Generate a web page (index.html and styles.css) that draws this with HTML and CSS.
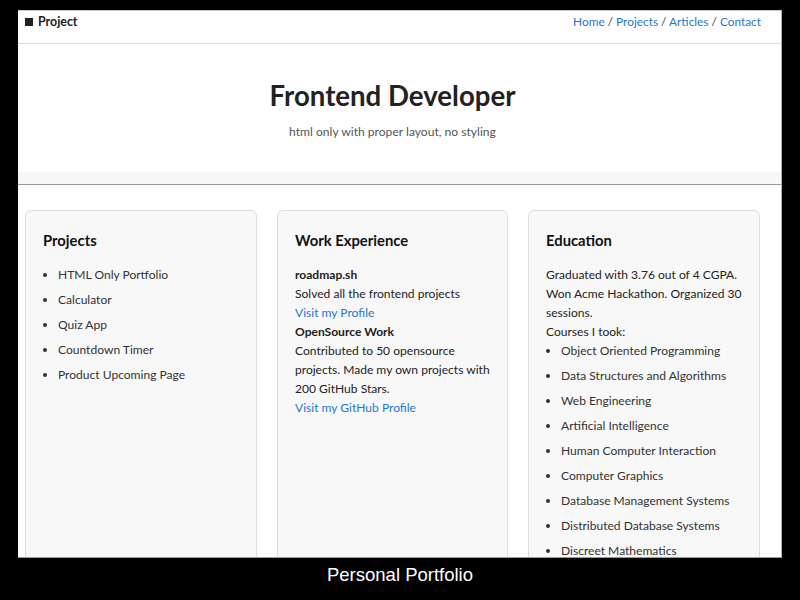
FILE: index.html
```html
<!DOCTYPE html>
<html lang="en">
<head>
<meta charset="utf-8">
<title>Personal Portfolio</title>
<link rel="stylesheet" href="styles.css">
</head>
<body>
<div class="frame">
  <header class="topbar">
    <div class="brand"><span class="square"></span>Project</div>
    <nav class="nav"><a href="#">Home</a> / <a href="#">Projects</a> / <a href="#">Articles</a> / <a href="#">Contact</a></nav>
  </header>
  <section class="hero">
    <h1 class="hero-title">Frontend Developer</h1>
    <p class="hero-sub">html only with proper layout, no styling</p>
  </section>
  <div class="band"></div>
  <main class="cards">
    <section class="card">
      <h2 class="card-title">Projects</h2>
      <ul class="list">
        <li>HTML Only Portfolio</li>
        <li>Calculator</li>
        <li>Quiz App</li>
        <li>Countdown Timer</li>
        <li>Product Upcoming Page</li>
      </ul>
    </section>
    <section class="card">
      <h2 class="card-title">Work Experience</h2>
      <div class="text">
        <strong>roadmap.sh</strong><br>
        Solved all the frontend projects<br>
        <a href="#">Visit my Profile</a><br>
        <strong>OpenSource Work</strong><br>
        Contributed to 50 opensource projects. Made my own projects with 200 GitHub Stars.<br>
        <a href="#">Visit my GitHub Profile</a>
      </div>
    </section>
    <section class="card">
      <h2 class="card-title">Education</h2>
      <div class="text">
        Graduated with 3.76 out of 4 CGPA. Won Acme Hackathon. Organized 30 sessions.<br>
        Courses I took:
      </div>
      <ul class="list">
        <li>Object Oriented Programming</li>
        <li>Data Structures and Algorithms</li>
        <li>Web Engineering</li>
        <li>Artificial Intelligence</li>
        <li>Human Computer Interaction</li>
        <li>Computer Graphics</li>
        <li>Database Management Systems</li>
        <li>Distributed Database Systems</li>
        <li>Discreet Mathematics</li>
      </ul>
    </section>
  </main>
</div>
<div class="caption">Personal Portfolio</div>
</body>
</html>
```

FILE: styles.css
```css
html, body {
  margin: 0;
  padding: 0;
  background: #000;
}
body {
  font-family: Lato, "Open Sans", sans-serif;
  color: #222;
}
.frame {
  box-sizing: border-box;
  width: 764px;
  height: 548px;
  margin: 10px 0 0 18px;
  background: #fff;
  border-top: 1px solid #c8c8c8;
  border-right: 1px solid #b0b0b0;
  border-bottom: 1px solid #999;
  overflow: hidden;
}
.topbar {
  box-sizing: border-box;
  height: 33px;
  display: flex;
  justify-content: space-between;
  align-items: flex-start;
  padding: 2px 20px 0 7px;
  border-bottom: 1px solid #ddd;
  font-size: 11.85px;
  line-height: 18px;
}
.brand {
  font-weight: 700;
  font-size: 12.4px;
  color: #222;
  display: flex;
  align-items: center;
}
.square {
  display: inline-block;
  width: 8px;
  height: 8px;
  background: #222;
  margin-right: 5px;
}
.nav {
  color: #444;
}
a {
  color: #1f76d2;
  text-decoration: none;
}
.hero {
  text-align: center;
  padding: 34px 21px 31px 7px;
  background: #fff;
}
.hero-title {
  margin: 0;
  font-size: 27.6px;
  line-height: 36px;
  font-weight: 700;
  color: #222;
}
.hero-sub {
  margin: 9px 0 0;
  font-size: 12.1px;
  line-height: 18px;
  color: #555;
}
.band {
  height: 12px;
  background: #f7f7f7;
  border-bottom: 1px solid #999;
}
.cards {
  display: grid;
  grid-template-columns: 232px 231px 232px;
  column-gap: 20px;
  padding: 25px 0 0 7px;
}
.card {
  box-sizing: border-box;
  height: 400px;
  background: #f8f8f8;
  border: 1px solid #ddd;
  border-radius: 6px;
  padding: 19px 12px 0 17px;
  font-size: 12.05px;
  line-height: 19px;
  color: #222;
}
.card-title {
  margin: 0 0 15px;
  font-size: 14.8px;
  line-height: 20px;
  font-weight: 700;
  color: #111;
}
.list {
  margin: 0;
  padding-left: 15px;
  color: #333;
}
.list li {
  margin-bottom: 6px;
}
.caption {
  text-align: center;
  color: #fff;
  font-family: "Liberation Sans", Arial, sans-serif;
  font-size: 18.5px;
  line-height: 20px;
  padding-top: 7px;
}
```
